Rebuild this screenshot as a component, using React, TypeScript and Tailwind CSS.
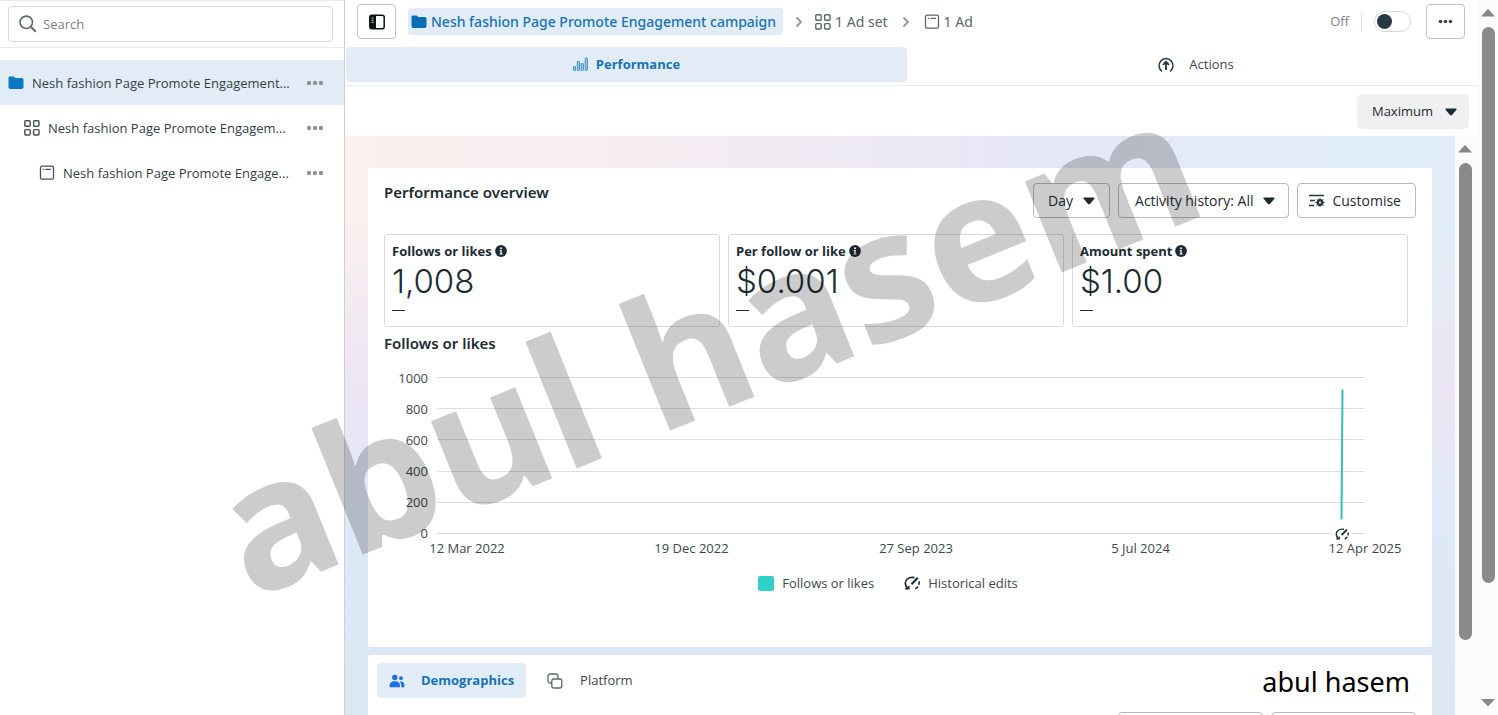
import React, { useState } from 'react';

type IconProps = { className?: string };

const FolderIcon = ({ className = '' }: IconProps) => (
  <svg viewBox="0 0 16 14" className={`h-[14px] w-4 shrink-0 ${className}`} fill="currentColor">
    <path d="M.5 2.200C.5 1 1.100.5 2 .5h3.200c.7 0 1.100.2 1.500.8l.4.700h6.500c1.200 0 1.900.7 1.900 1.900v7.200c0 1.200-.7 1.900-1.900 1.900H2.400c-1.200 0-1.900-.7-1.900-1.900z" />
  </svg>
);

const GridIcon = ({ className = '' }: IconProps) => (
  <svg viewBox="0 0 16 16" className={`h-4 w-4 shrink-0 ${className}`} fill="none" stroke="currentColor" strokeWidth="1.4">
    <rect x=".8" y=".8" width="5.400" height="5.400" rx="1" />
    <rect x="9.600" y=".8" width="5.400" height="5.400" rx="1" />
    <rect x=".8" y="9.600" width="5.400" height="5.400" rx="1" />
    <rect x="9.600" y="9.600" width="5.400" height="5.400" rx="1" />
  </svg>
);

const AdIcon = ({ className = '' }: IconProps) => (
  <svg viewBox="0 0 16 16" className={`h-4 w-4 shrink-0 ${className}`} fill="none" stroke="currentColor" strokeWidth="1.3">
    <rect x="1.500" y="1.200" width="13" height="13" rx="1.500" />
    <path d="M3.800 4.300h1.500M6.500 4.300h5.500" />
  </svg>
);

const Chevron = () => (
  <svg viewBox="0 0 8 12" className="h-3 w-2 shrink-0 text-[#8f9599]" fill="none" stroke="currentColor" strokeWidth="1.8">
    <path d="M1.500 1.500 6 6l-4.500 4.500" />
  </svg>
);

const Caret = () => (
  <svg viewBox="0 0 12 8" className="h-2 w-3 shrink-0" fill="#1c2b33">
    <path d="M1.200.5h9.600c.8 0 1.100.8.6 1.300L7 6.900c-.6.6-1.400.6-2 0L.6 1.800C.1 1.300.4.5 1.200.5z" />
  </svg>
);

const Dots = ({ className = '' }: IconProps) => (
  <svg viewBox="0 0 18 6" className={`shrink-0 ${className}`} fill="currentColor">
    <circle cx="3" cy="3" r="2.200" />
    <circle cx="9" cy="3" r="2.200" />
    <circle cx="15" cy="3" r="2.200" />
  </svg>
);

const InfoIcon = () => (
  <svg viewBox="0 0 12 12" className="h-3 w-3 shrink-0">
    <circle cx="6" cy="6" r="5.900" fill="#1c2b33" />
    <circle cx="6" cy="3.200" r="1" fill="#fff" />
    <path d="M4.700 5.100h2v3.500h.8v1H4.600v-1h.8V6.100h-.7z" fill="#fff" />
  </svg>
);

const HistoryIcon = ({ className = '' }: IconProps) => (
  <svg viewBox="0 0 16 14" className={`shrink-0 ${className}`} fill="none" stroke="#1c2b33">
    <path d="M4 12.500C.4 9.500.6 5 3.500 2.900 5.500 1.300 8 1 10.500 1.600" strokeWidth="1.700" />
    <path d="M1.200 12.700h3.600V9.800" strokeWidth="1.500" />
    <path d="M7.500 8.200 13.800 1.800" strokeWidth="2.200" />
    <path d="M15 5.200c.3 1.300.2 2.500-.3 3.600M14 10.300c-.7 1.200-1.600 2-2.700 2.600" strokeWidth="1.600" />
  </svg>
);

const tree = [
  { label: 'Nesh fashion Page Promote Engagement...', Icon: FolderIcon, row: 'bg-[#e1ecf7] pl-2', icon: 'text-[#0a78be]' },
  { label: 'Nesh fashion Page Promote Engagem...', Icon: GridIcon, row: 'pl-6', icon: 'text-[#465058]' },
  { label: 'Nesh fashion Page Promote Engage...', Icon: AdIcon, row: 'pl-[39px]', icon: 'text-[#465058]' },
];

const metrics = [
  { label: 'Follows or likes', value: '1,008' },
  { label: 'Per follow or like', value: '$0.001' },
  { label: 'Amount spent', value: '$1.00' },
];

const ticks = [1000, 800, 600, 400, 200, 0];
const dates = ['12 Mar 2022', '19 Dec 2022', '27 Sep 2023', '5 Jul 2024', '12 Apr 2025'];

const outlineButton =
  'flex h-[35px] items-center rounded-[4px] border border-[#b4babd] bg-white text-[14px] font-medium text-[#1c2b33]';

const Sidebar = () => (
  <aside className="w-[345px] shrink-0 border-r border-[#ccd0d4] bg-white">
    <div className="border-t border-b border-[#e9eaec] px-2 py-[5px]">
      <label className="mr-[3px] flex h-9 items-center gap-[6px] rounded-[4px] border border-[#d5d8da] px-[10px]">
        <svg viewBox="0 0 18 18" className="h-[18px] w-[18px] shrink-0" fill="none" stroke="#5d686f" strokeWidth="1.600">
          <circle cx="7.300" cy="7.300" r="6.200" />
          <path d="m11.800 11.800 5 5" strokeWidth="2" />
        </svg>
        <input
          type="text"
          aria-label="Search"
          placeholder="Search"
          className="w-full bg-transparent pt-[2px] outline-none placeholder:text-[#7a8085]"
        />
      </label>
    </div>
    <nav className="pt-3">
      {tree.map(({ label, Icon, row, icon }) => (
        <div key={label} className={`flex h-[45px] items-center gap-2 pr-5 ${row}`}>
          <Icon className={icon} />
          <a href="#" className="flex-1 pt-[2px] whitespace-nowrap text-[#344047]">
            {label}
          </a>
          <button aria-label="More options" className="text-[#8d9397]">
            <Dots className="h-[6px] w-[18px]" />
          </button>
        </div>
      ))}
    </nav>
  </aside>
);

const Header = ({ on, onToggle }: { on: boolean; onToggle: () => void }) => (
  <header className="flex h-[43px] items-center pr-[13px] pl-3 text-[#5b666c]">
    <button
      aria-label="Toggle side panel"
      className="mr-3 flex h-[35px] w-[39px] items-center justify-center rounded-[4px] border border-[#bfc4c7]"
    >
      <svg viewBox="0 0 16 16" className="h-4 w-4">
        <rect x=".8" y="1.300" width="14.400" height="13.400" rx="2" fill="#fff" stroke="#0c1317" strokeWidth="1.500" />
        <path d="M1 2h6v12H1z" fill="#0c1317" />
        <path d="M2.500 4h2M2.500 6.200h2M2.500 8.400h2" stroke="#fff" strokeWidth=".8" />
      </svg>
    </button>
    <a
      href="#"
      className="flex h-[27px] items-center gap-1 rounded-[4px] bg-[#e1ecf7] pr-[7px] pl-[3px] font-['Noto_Sans',sans-serif] text-[14px] font-medium whitespace-nowrap text-[#1673b1]"
    >
      <FolderIcon className="text-[#0a6cb5]" />
      Nesh fashion Page Promote Engagement campaign
    </a>
    <div className="flex items-center gap-3 pl-3 font-['Noto_Sans',sans-serif] text-[14px] whitespace-nowrap">
      <Chevron />
      <a href="#" className="flex items-center gap-1">
        <GridIcon />1 Ad set
      </a>
      <span className="px-[2px]">
        <Chevron />
      </span>
      <a href="#" className="flex items-center gap-1">
        <AdIcon />1 Ad
      </a>
    </div>
    <label className="ml-auto flex items-center gap-3 text-[#7a8287]">
      <span>Off</span>
      <span className="h-5 w-px bg-[#dfe2e4]" />
      <input
        type="checkbox"
        role="switch"
        checked={on}
        onChange={onToggle}
        className="h-[21px] w-[37px] appearance-none rounded-full border border-[#d3dade] bg-white p-[2px] before:block before:h-[15px] before:w-[15px] before:rounded-full before:bg-[#283943] checked:before:ml-auto"
      />
    </label>
    <button
      aria-label="More actions"
      className="ml-[15px] flex h-[35px] w-[39px] items-center justify-center rounded-[4px] border border-[#bfc4c7] text-[#3a464d]"
    >
      <Dots className="h-[5px] w-[15px]" />
    </button>
  </header>
);

const Chart = () => (
  <div className="mt-6">
    <div className="flex gap-[9px] pr-[51px]">
      <div className="-my-[9px] flex w-11 flex-col justify-between text-right leading-5">
        {ticks.map((t) => (
          <span key={t}>{t}</span>
        ))}
      </div>
      <div className="relative flex h-[157px] flex-1 flex-col justify-between">
        {ticks.map((t) => (
          <div key={t} className="h-px bg-[#dcdedf]" />
        ))}
        {/* the only day with results sits at the right end */}
        <svg viewBox="0 0 4 130" className="absolute top-[12px] right-[21px] h-[131px] w-1">
          <path d="M2.500 0 1.500 130" stroke="#35bfb0" strokeWidth="2" />
        </svg>
        <span className="absolute right-[14px] -bottom-[6px] bg-white px-[2px]">
          <HistoryIcon className="h-3 w-[14px]" />
        </span>
      </div>
    </div>
    <div className="mt-1 mr-[3px] ml-[35px] flex justify-between leading-5">
      {dates.map((d) => (
        <span key={d} className="w-24 text-center whitespace-nowrap">
          {d}
        </span>
      ))}
    </div>
    <div className="mt-[15px] flex justify-center gap-[30px] pr-6 leading-5">
      <span className="flex items-center gap-2">
        <i className="h-[15px] w-4 rounded-[2px] bg-[#2fd0c8]" />
        Follows or likes
      </span>
      <span className="flex items-center gap-2">
        <HistoryIcon className="h-[14px] w-4" />
        Historical edits
      </span>
    </div>
  </div>
);

const ScrollBar = ({ thumb, down }: { thumb: string; down?: boolean }) => (
  <div className="flex w-5 shrink-0 flex-col items-center bg-[#fcfcfc] pb-2">
    <svg viewBox="0 0 14 8" className="mt-[9px] mb-[10px] h-2 w-[14px] shrink-0" fill="#858585">
      <path d="M7 0 14 7.500H0z" />
    </svg>
    <div className={`w-[13px] rounded-full bg-[#8a8a8a] ${thumb}`} />
    {down && (
      <svg viewBox="0 0 14 8" className="mt-auto h-2 w-[14px] shrink-0" fill="#858585">
        <path d="M0 0h14L7 7.500z" />
      </svg>
    )}
  </div>
);

const App = () => {
  const [on, setOn] = useState(false);

  return (
    <div className="relative flex h-screen overflow-hidden bg-white font-['Open_Sans',sans-serif] text-[13px] text-[#3d484e]">
      <Sidebar />

      <main className="flex min-w-0 flex-1 flex-col">
        <Header on={on} onToggle={() => setOn(!on)} />

        <div className="flex border-b border-[#e9ebec] pt-1 pr-[10px] pb-[3px] pl-px">
          <button className="flex h-[35px] w-1/2 items-center justify-center gap-2 rounded-[4px] bg-[#e1ecf7] font-bold text-[#1673b1]">
            <svg viewBox="0 0 15 15" className="h-[15px] w-[15px]" fill="#a9cbe5" stroke="#3f8ec4" strokeWidth="1">
              <rect x=".5" y="9.500" width="2" height="4" rx=".6" />
              <rect x="4.300" y="4.500" width="2.200" height="9" rx=".6" />
              <rect x="8.200" y="6.500" width="2.200" height="7" rx=".6" />
              <rect x="12.200" y="1" width="2.200" height="12.500" rx=".6" />
            </svg>
            Performance
          </button>
          <button className="flex h-[35px] w-1/2 items-center justify-center gap-[14px] pl-4">
            <svg viewBox="0 0 18 16" className="h-4 w-[18px]" fill="none" stroke="#28343b" strokeWidth="1.500">
              <path d="M5 14.300A7 7 0 1 1 13 14.300" />
              <path d="M9 13V5M6 7.800l3-3 3 3" strokeWidth="1.800" />
            </svg>
            Actions
          </button>
        </div>

        <div className="flex h-[50px] shrink-0 items-center justify-end pr-[9px]">
          <button className="flex h-[35px] items-center gap-3 rounded-[5px] bg-[#f0f0f0] pt-px pr-3 pl-[15px] text-[#1c2b33]">
            Maximum
            <Caret />
          </button>
        </div>

        <div className="flex min-h-0 flex-1">
          <div className="min-w-0 flex-1 overflow-hidden bg-[linear-gradient(180deg,#ffffff00_15%,#ebe5f4_45%,#dfe9f9_65%,#dbe8f4_92%),linear-gradient(90deg,#faf0ee_0%,#f7edf0_25%,#e6e7f6_60%,#e1edf8_90%)] px-[23px] pt-8">
            <section className="h-[479px] rounded-[3px] bg-white px-4 pt-[14px]">
              <div className="flex items-start justify-between">
                <h2 className="font-['Noto_Sans',sans-serif] text-[15px] leading-5 font-semibold text-[#1c2b33]">
                  Performance overview
                </h2>
                <div className="mt-px flex gap-2">
                  <button className={`${outlineButton} gap-[10px] px-[14px]`}>
                    Day
                    <Caret />
                  </button>
                  <button className={`${outlineButton} gap-[10px] pr-[13px] pl-4`}>
                    Activity history: All
                    <Caret />
                  </button>
                  <button className={`${outlineButton} gap-[7px] pr-[14px] pl-[11px]`}>
                    <svg viewBox="0 0 16 14" className="h-[14px] w-4" fill="none" stroke="#28343b" strokeWidth="1.400">
                      <path d="M0 1.500h15M1 6.500h5M0 11.500h5" />
                      <circle cx="11" cy="8.500" r="2.500" strokeWidth="2" />
                      <path d="M11 4v9M6.500 8.500h9M7.800 5.300l6.400 6.400M14.200 5.300l-6.400 6.400" strokeWidth="1" />
                      <circle cx="11" cy="8.500" r="1" fill="#fff" stroke="none" />
                    </svg>
                    Customise
                  </button>
                </div>
              </div>

              <div className="mt-4 mr-2 grid grid-cols-3 gap-2">
                {metrics.map((m) => (
                  <div key={m.label} className="h-[93px] rounded-[3px] border border-[#d9dcdd] px-[7px] pt-[6px] text-[#1c2b33]">
                    <div className="flex items-center gap-[3px] leading-5 font-bold">
                      {m.label}
                      <InfoIcon />
                    </div>
                    <div className="font-['Inter',sans-serif] text-[33px] leading-10 font-light">{m.value}</div>
                    <div className="mt-[9px] h-px w-[13px] bg-[#1c2b33]" />
                  </div>
                ))}
              </div>

              <h3 className="mt-[6px] font-['Noto_Sans',sans-serif] text-[15px] leading-5 font-semibold text-[#1c2b33]">
                Follows or likes
              </h3>
              <Chart />
            </section>

            <section className="mt-2 rounded-[3px] bg-white pt-2 pr-4 pb-6 pl-[9px]">
              <div className="flex gap-[9px]">
                <button className="flex h-[35px] items-center gap-4 rounded-[4px] bg-[#e1ecf7] px-3 font-bold text-[#1673b1]">
                  <svg viewBox="0 0 16 14" className="h-[14px] w-4" fill="#1f6fe0">
                    <circle cx="5.800" cy="3.500" r="2.700" />
                    <path d="M.5 13.300c-.3-4.500 2-6 5.300-6s5.600 1.500 5.300 6z" />
                    <circle cx="12" cy="4.200" r="1.900" />
                    <path d="M12.300 13.300h3c.6-3.500-.7-5.800-3.300-5.800-.6 0-1 .1-1.400.3 1.500 1.300 2 3 1.700 5.500z" />
                  </svg>
                  Demographics
                </button>
                <button className="flex h-[35px] items-center gap-[17px] px-3">
                  <svg viewBox="0 0 16 16" className="h-4 w-4" fill="#fff" stroke="#5b666c" strokeWidth="1.300">
                    <rect x="1" y="1" width="10" height="9" rx="2" />
                    <rect x="4.800" y="6" width="10" height="9" rx="2" />
                  </svg>
                  Platform
                </button>
              </div>
              <div className="mt-[14px] flex justify-end gap-2">
                <select aria-label="Breakdown" className="h-[35px] w-[145px] rounded-[4px] border border-[#b4babd]" />
                <select aria-label="Metric" className="h-[35px] w-[145px] rounded-[4px] border border-[#b4babd]" />
              </div>
            </section>
          </div>
          <ScrollBar thumb="h-[477px]" />
          <div className="w-[3px] bg-[#fcfcfc]" />
        </div>
      </main>

      <ScrollBar thumb="h-[556px]" down />

      <div className="pointer-events-none absolute inset-0 flex items-center justify-center pr-[86px] pb-8">
        <span className="-rotate-[22deg] font-['Noto_Sans',sans-serif] text-[180px] leading-none font-bold whitespace-nowrap text-black/20">
          abul hasem
        </span>
      </div>
      <span className="pointer-events-none absolute right-[88px] bottom-[15px] font-['Noto_Sans',sans-serif] text-[27px] leading-9 text-black">
        abul hasem
      </span>
    </div>
  );
};

export default App;
